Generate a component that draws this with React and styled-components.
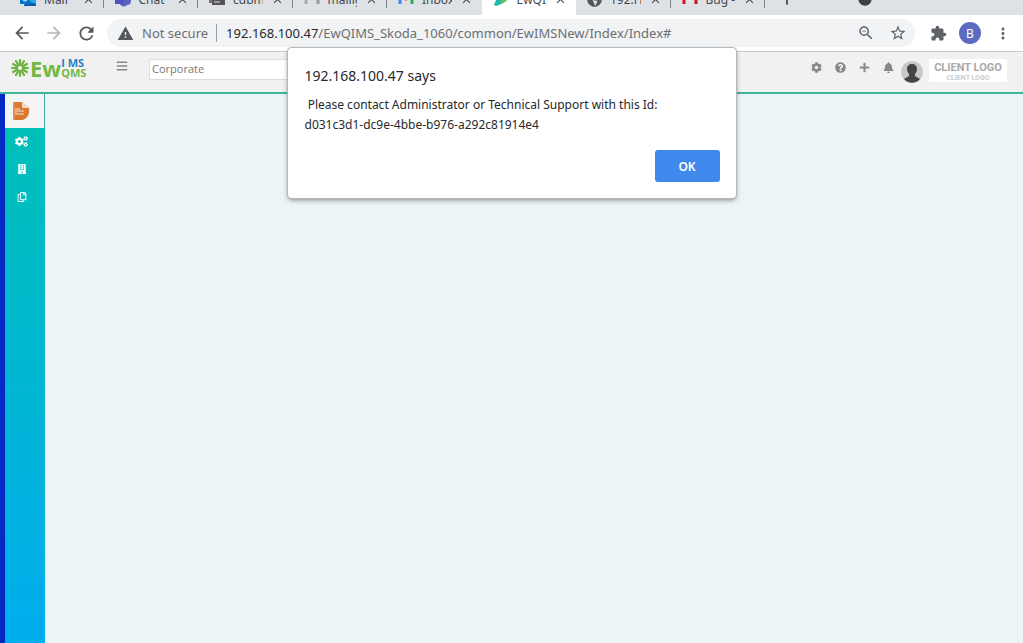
import React, { useState } from "react";
import styled, { createGlobalStyle } from "styled-components";
import {
  MdArrowBack,
  MdArrowForward,
  MdRefresh,
  MdWarning,
  MdZoomOut,
  MdStarBorder,
  MdExtension,
  MdMoreVert,
  MdClose,
  MdAdd,
  MdArrowDropDownCircle,
} from "react-icons/md";
import { FaCog, FaQuestionCircle, FaPlus, FaBell, FaBars, FaCogs, FaBuilding, FaRegCopy, FaGlobeAmericas } from "react-icons/fa";

const GlobalStyle = createGlobalStyle`
  * {
    box-sizing: border-box;
  }
  body {
    margin: 0;
    font-family: "Noto Sans", "Open Sans", sans-serif;
    color: #333;
  }
  button {
    display: inline-flex;
    align-items: center;
    justify-content: center;
    padding: 0;
    border: 0;
    background: none;
    color: inherit;
    font-family: inherit;
  }
`;

const Page = styled.div`
  position: relative;
  display: flex;
  flex-direction: column;
  min-height: 100vh;
`;

/* ---- browser ---- */

const TabStrip = styled.div`
  display: flex;
  align-items: flex-end;
  height: 15px;
  padding-left: 9px;
  overflow: hidden;
  background: #dee1e6;
`;

const Tabs = styled.div`
  display: grid;
  grid-template-columns: repeat(8, minmax(0, 1fr));
  flex: 0 1 756px;
`;

const Tab = styled.div`
  display: flex;
  align-items: center;
  gap: 8px;
  height: 32px;
  padding-left: 11px;
  background: ${(props) => (props.$active ? "#fff" : "transparent")};
  color: #45494d;
  font-size: 12px;

  span {
    flex: 1;
    min-width: 0;
    white-space: nowrap;
    overflow: hidden;
  }
  & > svg {
    flex: none;
  }
`;

const Divider = styled.i`
  width: 1px;
  height: 18px;
  background: ${(props) => props.color || "#80868b"};
`;

const StripButton = styled.button`
  height: 32px;
  width: 44px;
  color: #3c4043;
`;

const StripMenu = styled(StripButton)`
  margin-left: 34px;
`;

const Toolbar = styled.div`
  display: flex;
  align-items: center;
  height: 37px;
  padding: 0 11px;
  background: #fff;
  border-bottom: 1px solid #c9cbce;
  color: #54575a;
`;

const NavButton = styled.button`
  width: 22px;
  height: 28px;
  margin-right: 10px;
  color: ${(props) => (props.disabled ? "#b5b7ba" : "#54575a")};
`;

const AddressBar = styled.div`
  display: flex;
  align-items: center;
  flex: 1;
  height: 28px;
  padding: 0 8px 0 10px;
  border-radius: 14px;
  background: #f1f3f4;
  font-size: 13px;
  color: #6b6f73;
  white-space: nowrap;

  b {
    font-weight: 400;
    color: #27292c;
  }
`;

const Secure = styled.span`
  margin: 0 8px;
`;

const Url = styled.span`
  flex: 1;
  margin-left: 9px;
`;

const ActionButton = styled.button`
  width: 18px;
  height: 24px;
  margin-left: ${(props) => props.$gap || 14}px;
  color: #5f6368;
`;

const Profile = styled.button`
  width: 22px;
  height: 22px;
  margin: 0 12px;
  border-radius: 50%;
  background: #5c6bc0 !important;
  color: #fff !important;
  font-size: 12px;
`;

/* ---- application ---- */

const Header = styled.header`
  display: flex;
  align-items: flex-start;
  height: 42px;
  padding: 3px 16px 0 10px;
  background: #f1f1f1;
  border-bottom: 2px solid #3fb59b;
  color: #888;
`;

const Logo = styled.a`
  display: flex;
  align-items: center;
  height: 26px;
  width: 77px;
  color: #74b843;
  text-decoration: none;
  font-weight: 700;
  font-size: 22px;
`;

const LogoStack = styled.span`
  display: flex;
  flex-direction: column;
  font-family: "Open Sans", sans-serif;
  font-size: 11px;
  line-height: 10px;

  em {
    font-style: normal;
    color: #2f7fc1;
  }
`;

const MenuButton = styled.button`
  margin: 4px 21px 0 29px;
  height: 14px;
`;

const SiteField = styled.input`
  width: 260px;
  height: 21px;
  margin-top: 4px;
  padding: 0 2px 2px;
  border: 1px solid #ddd;
  border-radius: 0;
  background: #fff;
  color: #777;
  font-family: "Open Sans", sans-serif;
  font-size: 11px;
`;

const HeaderActions = styled.div`
  display: flex;
  align-items: flex-start;
  margin-left: auto;

  & > button {
    width: 12px;
    height: 12px;
    margin: 6px 12px 0 0;
  }
`;

const Avatar = styled.svg`
  margin: 6px 6px 0 -5px;
`;

const ClientLogo = styled.div`
  width: 78px;
  height: 23px;
  margin-top: 4px;
  padding-top: 3px;
  background: #fff;
  text-align: center;
  font-family: Roboto, sans-serif;
  font-weight: 700;
  font-size: 11px;
  line-height: 12px;
  color: #a9a9a9;
  white-space: nowrap;

  small {
    display: block;
    font-size: 7px;
    line-height: 8px;
    color: #ccc;
  }
`;

const Body = styled.div`
  display: flex;
  flex: 1;
`;

const Sidebar = styled.nav`
  display: flex;
  flex-direction: column;
  width: 45px;
  border-left: 5px solid #0428c4;
  background: linear-gradient(#00c1b5, #00adee);
`;

const SideItem = styled.button`
  height: ${(props) => (props.$active ? 34 : 28)}px;
  padding: 0 7px ${(props) => (props.$active ? 0 : 2)}px 0 !important;
  background: ${(props) => (props.$active ? "#f4f4f4" : "transparent")} !important;
  border-right: ${(props) => (props.$active ? "1px solid #3fb59b" : "0")} !important;
  color: #fff !important;
`;

const Content = styled.main`
  flex: 1;
  background: #edf4f8;
`;

/* ---- alert ---- */

const Dialog = styled.div`
  position: absolute;
  top: 48px;
  left: 50%;
  width: 448px;
  transform: translateX(-50%);
  padding: 17px 16px 16px 17px;
  background: #fff;
  border-radius: 4px;
  box-shadow: 0 0 0 1px #b4b8bb, 0 2px 5px rgba(0, 0, 0, 0.45);
  color: #27292c;

  h1 {
    margin: 0 0 8px;
    font-size: 14px;
    line-height: 22px;
    font-weight: 400;
  }
  p {
    margin: 0 0 15px;
    font-size: 12px;
    line-height: 20px;
    white-space: pre-wrap;
  }
`;

const OkButton = styled.button`
  display: flex !important;
  width: 65px;
  height: 32px;
  margin-left: auto;
  border-radius: 3px;
  background: #3f88ec !important;
  color: #fff !important;
  font-size: 12px;
  font-weight: 600;
`;

const OutlookIcon = () => (
  <svg width="16" height="16" viewBox="0 0 16 16">
    <path d="M5 1h11v13H5z" fill="#28a8ea" />
    <path d="M5 9l11 4v2H4z" fill="#0f5fa8" />
    <rect y="4" width="10" height="9" fill="#0078d4" />
    <circle cx="5" cy="8" r="2" fill="none" stroke="#fff" />
  </svg>
);

const TeamsIcon = () => (
  <svg width="16" height="16" viewBox="0 0 16 16">
    <circle cx="9" cy="3" r="2" fill="#7b83eb" />
    <path d="M4 6h12v4c0 3-2 4-4 4-1 2-6 2-7-1z" fill="#5a62c3" />
    <rect y="4" width="9" height="9" fill="#4b53bc" />
  </svg>
);

const MailIcon = ({ left, right, mid }) => (
  <svg width="16" height="16" viewBox="0 0 16 16">
    <path d="M2 3v10" stroke={left} strokeWidth="3" />
    <path d="M14 3v10" stroke={right} strokeWidth="3" />
    <path d="M2 3l6 5 6-5" fill="none" stroke={mid} strokeWidth="3" />
  </svg>
);

const StackIcon = () => (
  <svg width="16" height="16" viewBox="0 0 16 16">
    <path d="M0 2h11v10H0z" fill="#777" />
    <path d="M3 5h13v9H3z" fill="#555" />
    <path d="M5 11h6" stroke="#ddd" />
  </svg>
);

const SwirlIcon = () => (
  <svg width="16" height="16" viewBox="0 0 16 16">
    <path d="M1 14C3 7 8 2 15 1c-1 4-4 5-6 7 3-1 4 0 5 2-3-1-5 3-8 4-2 1-4 1-5 0z" fill="#1bb8b0" />
    <path d="M7 10c3-2 5-2 7 0-2 0-3 3-6 3z" fill="#69c36b" />
  </svg>
);

const Burst = () => (
  <svg width="20" height="20" viewBox="-10 -10 20 20">
    {[...Array(12)].map((_, i) => (
      <path key={i} d="M0-3V-8" stroke="#6db33f" strokeWidth="2.2" strokeLinecap="round" transform={`rotate(${i * 30})`} />
    ))}
  </svg>
);

const DocIcon = () => (
  <svg width="17" height="18" viewBox="0 0 17 18">
    <path d="M0 0h9l7 6c1 6-2 12-8 12H0z" fill="#d9792f" />
    <path d="M9 0l7 6h-7z" fill="#f4d9c3" />
    <path d="M3 6v7M4 7h3M4 9h7M4 12h7" stroke="#f8e3d2" />
    <path d="M1 0v18" stroke="#e9a878" />
  </svg>
);

const tabs = [
  { label: "Mail", icon: <OutlookIcon /> },
  { label: "Chat |", icon: <TeamsIcon /> },
  { label: "cdbm", icon: <StackIcon /> },
  { label: "mailig", icon: <MailIcon left="#aaa" right="#999" mid="#bbb" /> },
  { label: "Inbox", icon: <MailIcon left="#4285f4" right="#34a853" mid="#ea4335" /> },
  { label: "EwQIM", icon: <SwirlIcon />, active: true },
  { label: "192.H", icon: <FaGlobeAmericas size={15} color="#54575a" /> },
  { label: "Bug -", icon: <MailIcon left="#c5162e" right="#c5162e" mid="#fff" /> },
];

function Browser() {
  return (
    <>
      <TabStrip>
        <Tabs>
          {tabs.map((tab, i) => (
            <Tab key={tab.label} $active={tab.active}>
              {tab.icon}
              <span>{tab.label}</span>
              <button aria-label="Close tab"><MdClose size={13} /></button>
              <Divider color={i === 4 || i === 5 ? "transparent" : undefined} />
            </Tab>
          ))}
        </Tabs>
        <StripButton aria-label="New tab"><MdAdd size={20} /></StripButton>
        <StripMenu aria-label="Search tabs"><MdArrowDropDownCircle size={16} /></StripMenu>
      </TabStrip>
      <Toolbar>
        <NavButton aria-label="Back"><MdArrowBack size={20} /></NavButton>
        <NavButton aria-label="Forward" disabled><MdArrowForward size={20} /></NavButton>
        <NavButton aria-label="Reload"><MdRefresh size={21} /></NavButton>
        <AddressBar>
          <MdWarning size={17} color="#54575a" />
          <Secure>Not secure</Secure>
          <Divider color="#9a9da1" />
          <Url><b>192.168.100.47</b>/EwQIMS_Skoda_1060/common/EwIMSNew/Index/Index#</Url>
          <ActionButton aria-label="Zoom"><MdZoomOut size={18} /></ActionButton>
          <ActionButton aria-label="Bookmark"><MdStarBorder size={18} /></ActionButton>
        </AddressBar>
        <ActionButton aria-label="Extensions"><MdExtension size={17} /></ActionButton>
        <Profile>B</Profile>
        <ActionButton $gap={1} aria-label="Menu"><MdMoreVert size={19} /></ActionButton>
      </Toolbar>
    </>
  );
}

function App() {
  const [open, setOpen] = useState(true);
  const [site, setSite] = useState("Corporate");

  return (
    <Page>
      <GlobalStyle />
      <Browser />
      <Header>
        <Logo href="#">
          <Burst />
          Ew
          <LogoStack><em>I MS</em>QMS</LogoStack>
        </Logo>
        <MenuButton aria-label="Toggle menu"><FaBars size={12} /></MenuButton>
        <SiteField aria-label="Site" value={site} onChange={(e) => setSite(e.target.value)} />
        <HeaderActions>
          <button aria-label="Settings"><FaCog size={11} /></button>
          <button aria-label="Help"><FaQuestionCircle size={11} /></button>
          <button aria-label="Add"><FaPlus size={11} /></button>
          <button aria-label="Notifications"><FaBell size={11} /></button>
          <Avatar width="22" height="22" viewBox="0 0 22 22">
            <circle cx="11" cy="11" r="11" fill="#c9c9c9" />
            <path d="M11 3c3 0 5 2 5 5 0 2-1 4-2 5v2l5 3c-4 5-12 5-16 0l5-3v-2c-1-1-2-3-2-5 0-3 2-5 5-5z" fill="#444" />
          </Avatar>
          <ClientLogo>CLIENT LOGO<small>CLIENT LOGO</small></ClientLogo>
        </HeaderActions>
      </Header>
      <Body>
        <Sidebar>
          <SideItem $active aria-label="Documents"><DocIcon /></SideItem>
          <SideItem aria-label="Configuration"><FaCogs size={13} /></SideItem>
          <SideItem aria-label="Organisation"><FaBuilding size={10} /></SideItem>
          <SideItem aria-label="Copies"><FaRegCopy size={10} /></SideItem>
        </Sidebar>
        <Content />
      </Body>
      {open && (
        <Dialog role="alertdialog" aria-labelledby="alert-title">
          <h1 id="alert-title">192.168.100.47 says</h1>
          <p>{" Please contact Administrator or Technical Support with this Id:\nd031c3d1-dc9e-4bbe-b976-a292c81914e4"}</p>
          <OkButton onClick={() => setOpen(false)}>OK</OkButton>
        </Dialog>
      )}
    </Page>
  );
}

export default App;
